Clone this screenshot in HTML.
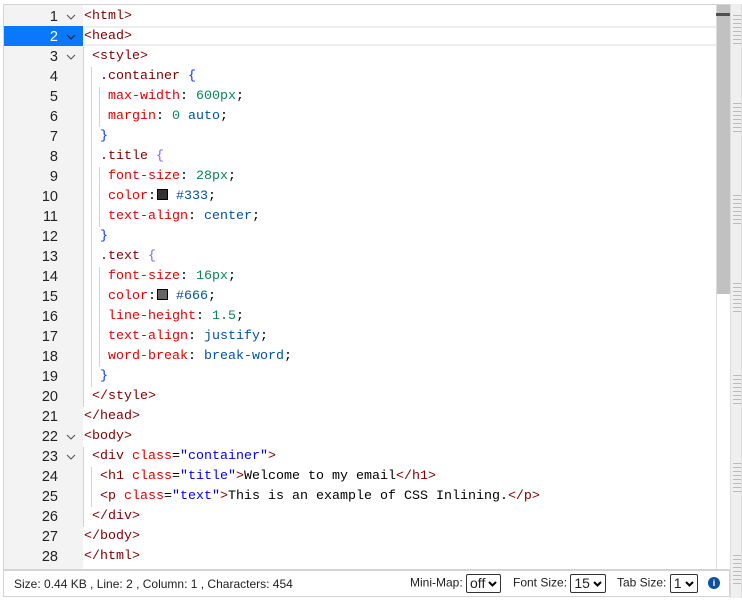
<!DOCTYPE html>
<html><head><style>
*{margin:0;padding:0;box-sizing:border-box}
body{width:742px;height:599px;background:#fff;position:relative;overflow:hidden;font-family:"Liberation Sans",sans-serif}
#ed{position:absolute;left:3px;top:4px;width:727px;height:566px;border:1px solid #d4d4d4;border-right:none;background:#fff;overflow:hidden}
#gut{position:absolute;left:0;top:0;width:79px;height:100%;background:#f3f3f3}
.ln{position:absolute;left:0;width:79px;height:20px;line-height:20px;font-family:"Liberation Sans",sans-serif;font-size:14.5px;color:#222}
.ln b{position:absolute;right:25px;font-weight:normal}
.ln svg{position:absolute;left:62px;top:6px}
.cl{position:absolute;left:80px;height:20px;line-height:20px;font-family:"Liberation Mono",monospace;font-size:13.33px;white-space:pre;color:#000}
.g{position:absolute;width:1px;height:20px;background:#d3d3d3}
.t{color:#800000}.a{color:#e50000}.s{color:#0000ff}.n{color:#098658}.v{color:#0451a5}.p{color:#e50000}.b1{color:#0431fa}.b2{color:#7b61ff}
.sw{display:inline-block;width:11px;height:11px;border:1px solid #000;vertical-align:-1px;margin-left:1px}
#sb{position:absolute;left:712px;top:0;width:14px;height:100%;background:#fff;border-left:1px solid #ddd}
#sl{position:absolute;left:713px;top:0;width:14px;height:289px;background:#c1c1c1}
#rul{position:absolute;left:730px;top:4px;width:12px;height:594px;background:#efefef;border-left:1px solid #ddd;border-right:1px solid #ddd}
#st{position:absolute;left:3px;top:570px;width:727px;height:27px;border:1px solid #d4d4d4;font-size:12px;color:#222}
.sel{display:inline-block;border:1px solid #333;border-radius:2px;height:19px;line-height:17px;padding:0 3px;font-size:14px;background:#fff;vertical-align:middle}
.sel svg{vertical-align:1px;margin-left:3px}
</style></head><body>
<div id="ed">
<div id="gut"></div>
<div style="position:absolute;left:0;top:21px;width:79px;height:20px;background:#0a78fa"></div>
<div style="position:absolute;left:80px;top:21px;width:632px;height:20px;border-top:2px solid #eee;border-bottom:2px solid #eee"></div>
<div id="lines"></div>
<div id="sb"></div><div id="sl"></div>
<div style="position:absolute;left:712px;top:8px;width:15px;height:3px;background:#505050"></div>
</div>
<div id="rul"><div style="position:absolute;left:2px;top:9px;width:8px;height:590px;background:repeating-linear-gradient(to bottom,transparent 0,transparent 2px,#bbb 2px,#bbb 3px,transparent 3px,transparent 4px);-webkit-mask:repeating-linear-gradient(to bottom,#000 0,#000 32px,transparent 32px,transparent 90px);mask:repeating-linear-gradient(to bottom,#000 0,#000 32px,transparent 32px,transparent 90px)"></div></div>
<div id="st">
<span style="position:absolute;left:10px;top:6px">Size: 0.44 KB , Line: 2 , Column: 1 , Characters: 454</span>
<span style="position:absolute;left:406px;top:3px">Mini-Map: <span class="sel">off<svg width="9" height="6" viewBox="0 0 9 6"><path d="M1 1l3.5 3.5L8 1" fill="none" stroke="#000" stroke-width="2"/></svg></span></span>
<span style="position:absolute;left:509px;top:3px">Font Size: <span class="sel">15<svg width="9" height="6" viewBox="0 0 9 6"><path d="M1 1l3.5 3.5L8 1" fill="none" stroke="#000" stroke-width="2"/></svg></span></span>
<span style="position:absolute;left:613px;top:3px">Tab Size: <span class="sel">1<svg width="9" height="6" viewBox="0 0 9 6"><path d="M1 1l3.5 3.5L8 1" fill="none" stroke="#000" stroke-width="2"/></svg></span></span>
<span style="position:absolute;left:704px;top:6px;width:12px;height:12px;border-radius:50%;background:#0d4fa0;color:#fff;font-size:9px;font-weight:bold;text-align:center;line-height:12px">i</span>
</div>
<script>
const L=[
[0,'<span class="t">&lt;html&gt;</span>',1],
[0,'<span class="t">&lt;head&gt;</span>',1],
[1,'<span class="t">&lt;style&gt;</span>',1],
[2,'<span class="t">.container</span> <span class="b1">{</span>'],
[3,'<span class="p">max-width</span>: <span class="n">600px</span>;'],
[3,'<span class="p">margin</span>: <span class="n">0</span> <span class="v">auto</span>;'],
[2,'<span class="b1">}</span>'],
[2,'<span class="t">.title</span> <span class="b2">{</span>'],
[3,'<span class="p">font-size</span>: <span class="n">28px</span>;'],
[3,'<span class="p">color</span>:<span class="sw" style="background:#333"></span> <span class="v">#333</span>;'],
[3,'<span class="p">text-align</span>: <span class="v">center</span>;'],
[2,'<span class="b1">}</span>'],
[2,'<span class="t">.text</span> <span class="b2">{</span>'],
[3,'<span class="p">font-size</span>: <span class="n">16px</span>;'],
[3,'<span class="p">color</span>:<span class="sw" style="background:#666"></span> <span class="v">#666</span>;'],
[3,'<span class="p">line-height</span>: <span class="n">1.5</span>;'],
[3,'<span class="p">text-align</span>: <span class="v">justify</span>;'],
[3,'<span class="p">word-break</span>: <span class="v">break-word</span>;'],
[2,'<span class="b1">}</span>'],
[1,'<span class="t">&lt;/style&gt;</span>'],
[0,'<span class="t">&lt;/head&gt;</span>'],
[0,'<span class="t">&lt;body&gt;</span>',1],
[1,'<span class="t">&lt;div</span> <span class="a">class</span>=<span class="s">"container"</span><span class="t">&gt;</span>',1],
[2,'<span class="t">&lt;h1</span> <span class="a">class</span>=<span class="s">"title"</span><span class="t">&gt;</span>Welcome to my email<span class="t">&lt;/h1&gt;</span>'],
[2,'<span class="t">&lt;p</span> <span class="a">class</span>=<span class="s">"text"</span><span class="t">&gt;</span>This is an example of CSS Inlining.<span class="t">&lt;/p&gt;</span>'],
[1,'<span class="t">&lt;/div&gt;</span>'],
[0,'<span class="t">&lt;/body&gt;</span>'],
[0,'<span class="t">&lt;/html&gt;</span>']];
let h='';
L.forEach((l,i)=>{const y=1+20*i+1;const sel=i==1;
h+=`<div class="ln" style="top:${y}px;${sel?'color:#fff':''}"><b>${i+1}</b>${l[2]?`<svg width="10" height="8" viewBox="0 0 10 8"><path d="M1 2l4 4 4-4" fill="none" stroke="${sel?'#222':'#555'}" stroke-width="1.1"/></svg>`:''}</div>`;
for(let j=0;j<l[0];j++)h+=`<div class="g" style="left:${79+8*j}px;top:${y}px"></div>`;
h+=`<div class="cl" style="top:${y}px">${' '.repeat(l[0])}${l[1]}</div>`;});
document.getElementById('lines').innerHTML=h;
</script>
</body></html>
